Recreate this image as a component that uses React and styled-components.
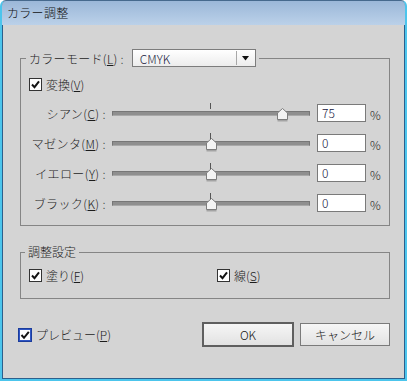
import styled, { createGlobalStyle } from "styled-components";

const GlobalStyle = createGlobalStyle`
  html, body {
    margin: 0;
    padding: 0;
    background: #ffffff;
  }
  body {
    font-family: "Noto Sans CJK JP", "Noto Sans", sans-serif;
    font-size: 12px;
    font-weight: 300;
    color: #1c1c1c;
  }
`;

const channels = [
  { name: "シアン", key: "C", value: 75 },
  { name: "マゼンタ", key: "M", value: 0 },
  { name: "イエロー", key: "Y", value: 0 },
  { name: "ブラック", key: "K", value: 0 },
];

const CheckBox = ({ focus }) => (
  <CheckSvg width={focus ? 14 : 13} height={focus ? 14 : 13} viewBox={focus ? "0 0 14 14" : "0 0 13 13"}>
    {focus ? (
      <>
        <rect x="0.5" y="0.5" width="13" height="13" fill="#fff" stroke="#1b3c9c" />
        <rect x="1.5" y="1.5" width="11" height="11" fill="#fff" stroke="#2f56c4" />
        <path d="M3.5 7 L6 9.8 L10.8 3.8" fill="none" stroke="#141414" strokeWidth="2" />
      </>
    ) : (
      <>
        <rect x="0.5" y="0.5" width="12" height="12" fill="#fff" stroke="#333" />
        <path d="M3 6.5 L5.5 9.2 L10 3.4" fill="none" stroke="#141414" strokeWidth="2" />
      </>
    )}
  </CheckSvg>
);

const Thumb = () => (
  <svg width="11" height="14" viewBox="0 0 11 14">
    <polygon points="0.5,13.5 0.5,7 5.5,2.5 10.5,7 10.5,13.5" fill="#a3a3a3" />
    <polygon points="0.5,11.5 0.5,5 5.5,0.5 10.5,5 10.5,11.5" fill="#f3f3f3" stroke="#7d7d7d" />
  </svg>
);

const App = () => {
  return (
    <>
      <GlobalStyle />
      <Window>
        <TitleBar>カラー調整</TitleBar>
        <Body>
          <Group>
            <ModeLegend>
              <span>
                カラーモード(<u>L</u>) :
              </span>
              <Select>
                <SelectText>CMYK</SelectText>
                <SelectArrow>
                  <svg width="7" height="5" viewBox="0 0 7 5">
                    <polygon points="0,0 7,0 3.5,4.5" fill="#111" />
                  </svg>
                </SelectArrow>
              </Select>
            </ModeLegend>
            <CheckRow $top={8}>
              <CheckItem>
                <CheckBox />
                <span>
                  変換(<u>V</u>)
                </span>
              </CheckItem>
            </CheckRow>
            <Sliders>
              {channels.map((c) => {
                const center = 4 + ((c.value + 100) / 200) * 190;
                return (
                  <SliderRow key={c.key}>
                    <RowLabel>
                      {c.name}(<u>{c.key}</u>) :
                    </RowLabel>
                    <Slider>
                      <Track />
                      <Tick />
                      <ThumbHolder style={{ left: center - 5.5 }}>
                        <Thumb />
                      </ThumbHolder>
                    </Slider>
                    <ValueBox>{c.value}</ValueBox>
                    <Percent>%</Percent>
                  </SliderRow>
                );
              })}
            </Sliders>
          </Group>

          <SettingsGroup>
            <TextLegend>調整設定</TextLegend>
            <TwoColumns>
              <CheckItem>
                <CheckBox />
                <span>
                  塗り(<u>F</u>)
                </span>
              </CheckItem>
              <CheckItem>
                <CheckBox />
                <span>
                  線(<u>S</u>)
                </span>
              </CheckItem>
            </TwoColumns>
          </SettingsGroup>

          <Footer>
            <PreviewItem>
              <CheckBox focus />
              <span>
                プレビュー(<u>P</u>)
              </span>
            </PreviewItem>
            <Buttons>
              <Button $default>OK</Button>
              <Button>キャンセル</Button>
            </Buttons>
          </Footer>
        </Body>
      </Window>
    </>
  );
};

export default App;

const Window = styled.div`
  box-sizing: border-box;
  width: 407px;
  height: 381px;
  display: flex;
  flex-direction: column;
  background: #d4d4d4;
  border: 2px solid #4cc5ec;
  border-top: 1px solid #46698d;
  border-radius: 6px 6px 0 0;
  box-shadow: inset 0 0 0 1px #2c5f8c;
  overflow: hidden;
`;

const TitleBar = styled.div`
  height: 24px;
  line-height: 24px;
  padding-left: 5px;
  font-size: 12px;
  letter-spacing: 0.3px;
  color: #111;
  background: linear-gradient(#9bb7d8, #bbd1e9);
`;

const Body = styled.div`
  flex: 1;
  display: flex;
  flex-direction: column;
  padding: 0 15px 0 18px;
`;

const Group = styled.fieldset`
  margin: 23px 0 0;
  padding: 0 0 7px;
  min-width: 0;
  border: 1px solid #858585;
`;

const ModeLegend = styled.legend`
  display: flex;
  align-items: center;
  gap: 8px;
  height: 20px;
  margin-left: 5px;
  padding: 0 3px;
  letter-spacing: 0.3px;
`;

const Select = styled.div`
  box-sizing: border-box;
  width: 124px;
  height: 18px;
  display: flex;
  align-items: center;
  border: 1px solid #7c7c7c;
  background: linear-gradient(#ffffff, #ececec);
  letter-spacing: 0;
`;

const SelectText = styled.span`
  flex: 1;
  padding-left: 7px;
  font-size: 12px;
  color: #1a1a40;
`;

const SelectArrow = styled.span`
  width: 17px;
  height: 14px;
  display: flex;
  align-items: center;
  justify-content: center;
  border-left: 1px solid #a8a8a8;
  margin-right: 1px;
`;

const CheckRow = styled.div`
  margin-top: ${(p) => p.$top}px;
  height: 16px;
  padding-left: 8px;
  display: flex;
  align-items: center;
`;

const CheckItem = styled.label`
  display: flex;
  align-items: center;
  gap: 4px;
  height: 16px;
`;

const CheckSvg = styled.svg`
  display: block;
  flex: none;
`;

const Sliders = styled.div`
  margin-top: 6px;
  display: flex;
  flex-direction: column;
`;

const SliderRow = styled.div`
  height: 30px;
  display: flex;
  align-items: center;
`;

const RowLabel = styled.span`
  box-sizing: border-box;
  width: 87px;
  padding-right: 2px;
  text-align: right;
  white-space: nowrap;
  letter-spacing: 0.4px;
`;

const Slider = styled.div`
  position: relative;
  width: 198px;
  height: 30px;
  margin-left: 4px;
`;

const Track = styled.div`
  position: absolute;
  left: 0;
  right: 0;
  top: 13px;
  height: 5px;
  box-sizing: border-box;
  background: #8f8f8f;
  border: 1px solid #777;
  border-bottom-color: #a9a9a9;
`;

const Tick = styled.div`
  position: absolute;
  left: 98px;
  top: 5px;
  width: 1px;
  height: 6px;
  background: #555;
`;

const ThumbHolder = styled.div`
  position: absolute;
  top: 10px;
  line-height: 0;
`;

const ValueBox = styled.div`
  box-sizing: border-box;
  width: 49px;
  height: 18px;
  margin-left: 7px;
  padding-left: 4px;
  line-height: 16px;
  background: #fff;
  border: 1px solid #7a7a7a;
  color: #14143c;
`;

const Percent = styled.span`
  margin-left: 4px;
  padding-top: 3px;
`;

const SettingsGroup = styled(Group)`
  margin-top: 18px;
  padding-bottom: 15px;
`;

const TextLegend = styled.legend`
  margin-left: 4px;
  padding: 0 3px;
  line-height: 16px;
`;

const TwoColumns = styled.div`
  margin-top: 7px;
  padding-left: 8px;
  display: grid;
  grid-template-columns: 188px auto;
  height: 16px;
  align-items: center;
`;

const Footer = styled.div`
  margin-top: 23px;
  height: 25px;
  display: flex;
  align-items: center;
  justify-content: space-between;
`;

const PreviewItem = styled(CheckItem)`
  margin-left: -2px;
`;

const Buttons = styled.div`
  display: flex;
  align-items: center;
  gap: 6px;
`;

const Button = styled.button`
  box-sizing: border-box;
  width: ${(p) => (p.$default ? 92 : 90)}px;
  height: ${(p) => (p.$default ? 25 : 23)}px;
  padding: 0;
  font: inherit;
  color: #141414;
  background: linear-gradient(#f6f6f6, #e2e2e2);
  border: ${(p) => (p.$default ? "2px solid #5f5f5f" : "1px solid #7a7a7a")};
  border-radius: 0;
`;
